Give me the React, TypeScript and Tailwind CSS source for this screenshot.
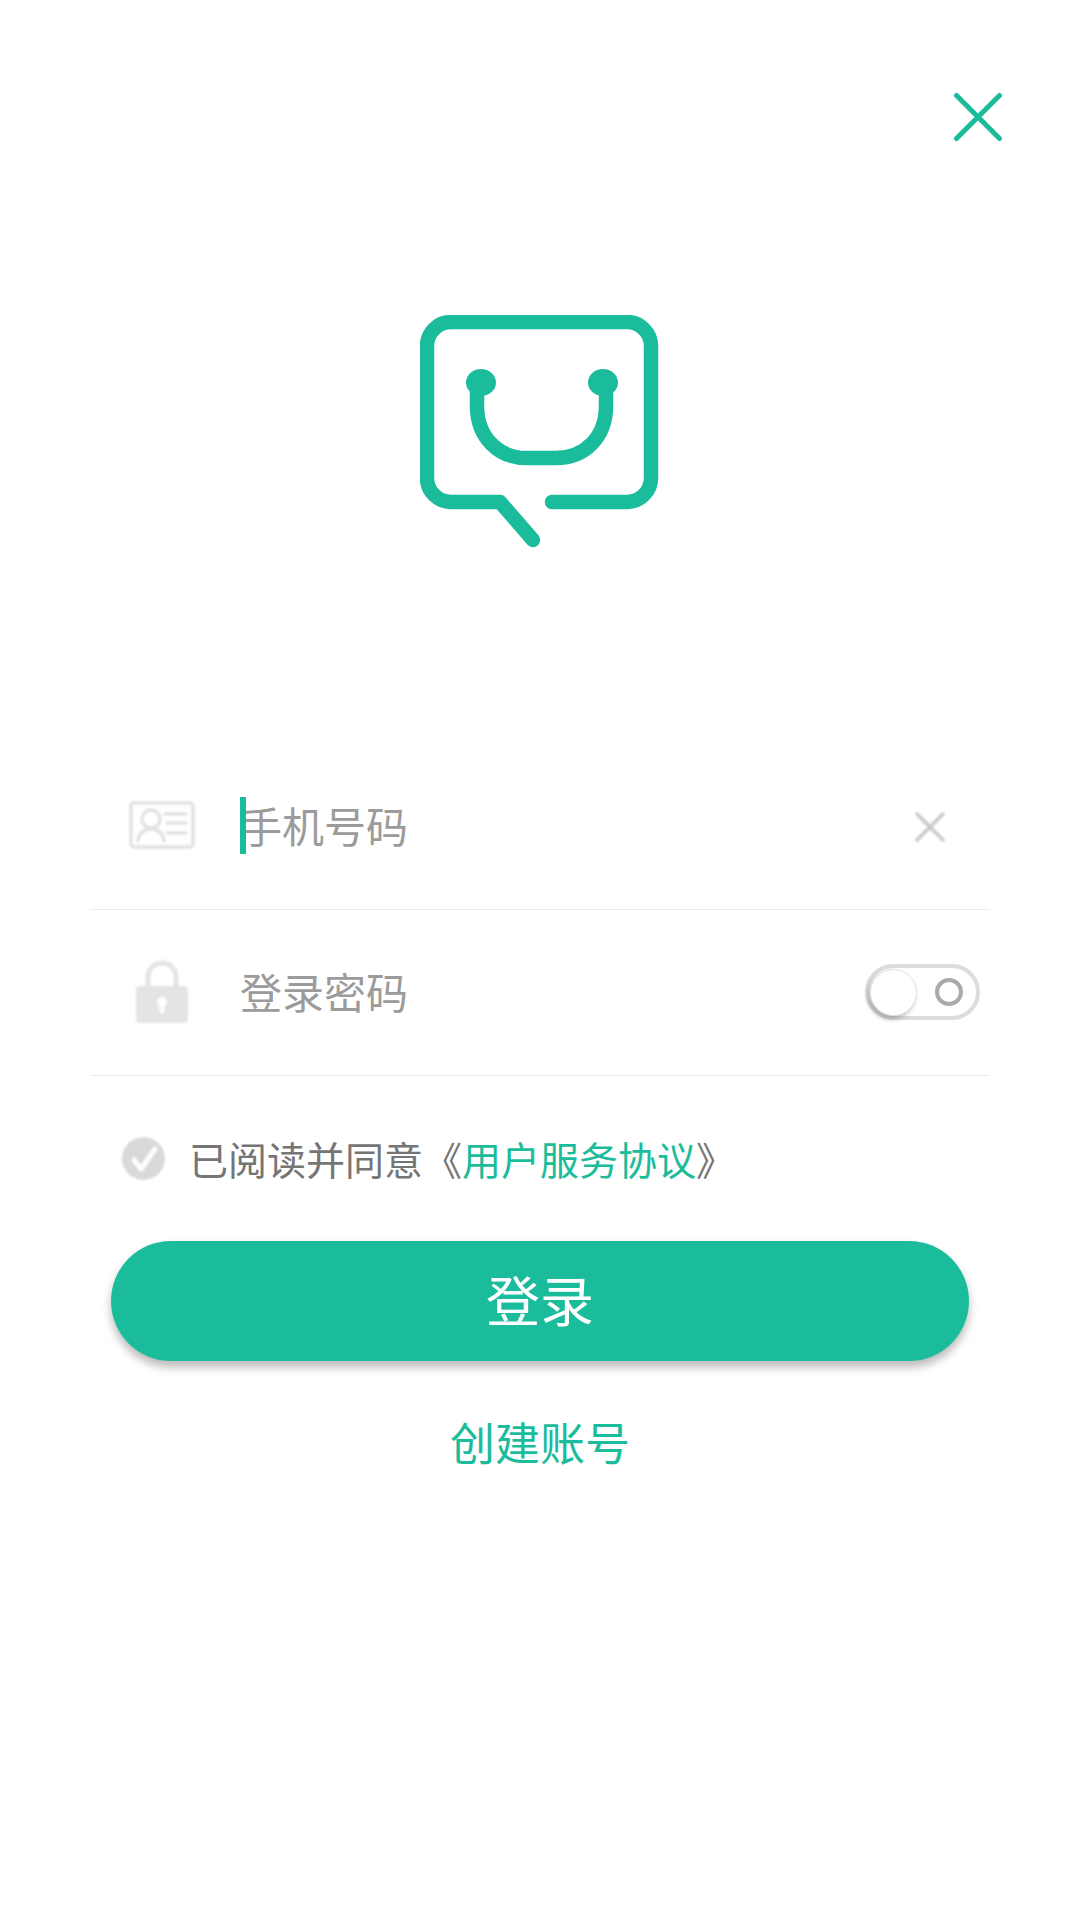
import React from "react";

const font = { fontFamily: '"Noto Sans CJK SC", "Noto Sans", sans-serif' };

const LogoIcon = () => (
  <svg viewBox="420 315 240 240" className="w-[240px] h-[240px]" fill="none" stroke="#1bbc9b" strokeWidth={14.5} strokeLinecap="round" strokeLinejoin="round">
    <path d="M533 540 L500 502 H451 A24 24 0 0 1 427 478 V346 A24 24 0 0 1 451 322 H627 A24 24 0 0 1 651 346 V478 A24 24 0 0 1 627 502 H552" />
    <path d="M477 385 V406 C477 437 498 458 527 458 H556 C585 458 606 437 606 406 V385" strokeLinecap="butt" />
    <ellipse cx={481} cy={382.5} rx={15} ry={13.5} fill="#1bbc9b" stroke="none" />
    <ellipse cx={603} cy={382.5} rx={15} ry={13.5} fill="#1bbc9b" stroke="none" />
  </svg>
);

const CloseIcon = () => (
  <svg viewBox="0 0 50 50" className="w-[50px] h-[50px]" fill="none" stroke="#1bbc9b" strokeWidth={5} strokeLinecap="round">
    <path d="M3.5 3.5 L46.5 46.5 M46.5 3.5 L3.5 46.5" />
  </svg>
);

const CardIcon = () => (
  <svg viewBox="0 0 70 52" className="w-[70px] h-[52px] blur-[1px] mt-[-3px]" fill="none" stroke="#e2e2e2" strokeWidth={3.5} strokeLinecap="round">
    <rect x={4} y={4} width={62} height={44} rx={3} />
    <circle cx={24} cy={20} r={9} />
    <path d="M11 42 C12 34 17 30 24 30 C31 30 36 34 37 42" />
    <path d="M38 15 H59 M40 24 H59 M40 34 H59" />
  </svg>
);

const LockIcon = () => (
  <svg viewBox="0 0 54 64" className="w-[54px] h-[64px] blur-[1px] mt-[-2px]" fill="none">
    <path d="M13 28 V18 C13 9 19 3 27 3 C35 3 41 9 41 18 V28" stroke="#e4e4e4" strokeWidth={5} />
    <rect x={1} y={26} width={52} height={37} rx={4} fill="#e4e4e4" />
    <circle cx={27} cy={42} r={5} fill="#fff" />
    <rect x={24.5} y={43} width={5} height={10} rx={1} fill="#fff" />
  </svg>
);

const ClearIcon = () => (
  <svg viewBox="0 0 30 30" className="w-[30px] h-[30px] blur-[1px]" fill="none" stroke="#c8c8c8" strokeWidth={3.5} strokeLinecap="round">
    <path d="M2 2 L28 28 M28 2 L2 28" />
  </svg>
);

const CheckIcon = () => (
  <svg viewBox="0 0 43 43" className="w-[43px] h-[43px] blur-[1px]" fill="none">
    <circle cx={21.5} cy={21.5} r={21.5} fill="#d9d9d9" />
    <path d="M12 23 L19 32 L33 12" stroke="#fff" strokeWidth={5} strokeLinecap="round" strokeLinejoin="round" />
  </svg>
);

const App: React.FC = () => {
  return (
    <div className="w-[1080px] h-[1920px] bg-white flex flex-col overflow-hidden" style={font}>
      <div className="flex justify-end pt-[92px] pr-[77px]">
        <CloseIcon />
      </div>

      <div className="flex justify-center mt-[173px]">
        <LogoIcon />
      </div>

      <div className="mt-[189px] px-[90px]">
        <div className="h-[166px] border-b border-[#ebebeb] flex items-center">
          <div className="w-[144px] mr-[6px] flex justify-center">
            <CardIcon />
          </div>
          <div className="relative flex-1 text-[42px] leading-none text-[#9b9b9b]">
            <span className="block mt-[-4px]">手机号码</span>
            <div className="absolute left-[0px] top-[-11px] w-[6px] h-[57px] bg-[#1bbc9b]" />
          </div>
          <div className="mr-[45px] flex">
            <ClearIcon />
          </div>
        </div>

        <div className="h-[166px] border-b border-[#ebebeb] flex items-center">
          <div className="w-[144px] mr-[6px] flex justify-center">
            <LockIcon />
          </div>
          <div className="flex-1 text-[42px] leading-none text-[#9b9b9b] mt-[-4px]">登录密码</div>
          <div className="relative mr-[10px] mt-[-2px] w-[115px] h-[56px] rounded-full border-[4px] border-[#dcdcdc] bg-white flex items-center justify-end pr-[13px]">
            <div className="w-[28px] h-[28px] rounded-full border-[4px] border-[#aaaaaa]" />
            <div className="absolute left-[1px] top-[1px] w-[47px] h-[47px] rounded-full bg-white border border-[#e2e2e2] shadow-[-2px_3px_5px_rgba(0,0,0,0.25)]" />
          </div>
        </div>

        <div className="h-[165px] flex items-center pl-[32px]">
          <CheckIcon />
          <div className="ml-[24px] mt-[-1px] text-[39px] leading-none text-[#757575] whitespace-nowrap">
            已阅读并同意《<span className="text-[#1bbc9b]">用户服务协议</span>》
          </div>
        </div>

        <button className="ml-[21px] w-[858px] h-[120px] rounded-full bg-[#1bbc9b] text-white text-[54px] leading-none shadow-[0_6px_10px_rgba(0,0,0,0.28)] flex items-center justify-center">
          <span className="mt-[-4px]">登录</span>
        </button>

        <div className="mt-[56px] text-center text-[45px] leading-[50px] text-[#1bbc9b]">创建账号</div>
      </div>
    </div>
  );
};

export default App;
